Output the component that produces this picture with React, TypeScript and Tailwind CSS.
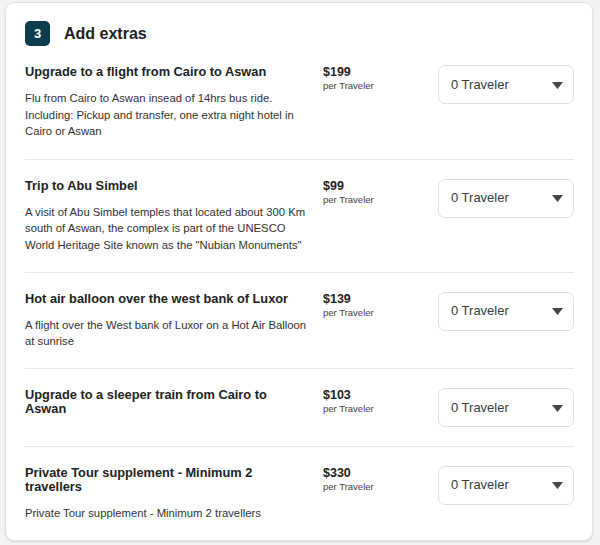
const extras = [
  {
    title: 'Upgrade to a flight from Cairo to Aswan',
    price: '$199',
    desc: 'Flu from Cairo to Aswan insead of 14hrs bus ride. Including: Pickup and transfer, one extra night hotel in Cairo or Aswan',
  },
  {
    title: 'Trip to Abu Simbel',
    price: '$99',
    desc: 'A visit of Abu Simbel temples that located about 300 Km south of Aswan, the complex is part of the UNESCO World Heritage Site known as the "Nubian Monuments"',
  },
  {
    title: 'Hot air balloon over the west bank of Luxor',
    price: '$139',
    desc: 'A flight over the West bank of Luxor on a Hot Air Balloon at sunrise',
  },
  {
    title: 'Upgrade to a sleeper train from Cairo to Aswan',
    price: '$103',
    desc: '',
  },
  {
    title: 'Private Tour supplement - Minimum 2 travellers',
    price: '$330',
    desc: 'Private Tour supplement - Minimum 2 travellers',
  },
]

function TravelerSelect() {
  return (
    <button className="flex h-[39px] w-[136px] items-center justify-between rounded-[7px] border border-[#dedfe0] bg-white pl-[12px] pr-[10px] text-[13px] text-[#3a3a3a]">
      <span>0 Traveler</span>
      <svg width="11" height="7" viewBox="0 0 11 7" className="mt-[1px]">
        <path d="M0 0 H11 L5.5 7 Z" fill="#474747" />
      </svg>
    </button>
  )
}

export default function App() {
  return (
    <div className="min-h-[545px] w-[600px] bg-[#f2f3f4] pl-[5px] pr-[7px] pt-[2px] pb-[4px] font-['Liberation_Sans',Arial,sans-serif]">
      <div className="rounded-[9px] border border-[#e0e2e4] bg-white pl-[19px] pr-[18px] pt-[18px] shadow-[0_1px_2px_rgba(0,0,0,0.12)]">
        <div className="flex items-center gap-[14px]">
          <div className="flex h-[25px] w-[25px] items-center justify-center rounded-[5px] bg-[#0c3c4e] text-[13px] font-bold text-white">
            3
          </div>
          <h2 className="text-[16px] font-bold text-[#222]">Add extras</h2>
        </div>

        <div className="flex flex-col">
          {extras.map((item, i) => (
            <div
              key={item.title}
              className={
                i === 0
                  ? 'flex py-[19px]'
                  : 'flex border-t border-[#e6e7e8] pt-[19px] pb-[18.5px]'
              }
            >
              <div className="w-[283px] shrink-0">
                <h3 className="text-[12.8px] font-bold leading-[14px] text-[#222]">{item.title}</h3>
                {item.desc && (
                  <p className="mt-[11px] text-[11.3px] leading-[16.5px] text-[#333]">{item.desc}</p>
                )}
              </div>
              <div className="ml-[15px] w-[115px] shrink-0">
                <div className="text-[12.5px] font-bold leading-[15px] text-[#222]">{item.price}</div>
                <div className="text-[9.5px] leading-[12px] text-[#444]">per Traveler</div>
              </div>
              <TravelerSelect />
            </div>
          ))}
        </div>
      </div>
    </div>
  )
}
